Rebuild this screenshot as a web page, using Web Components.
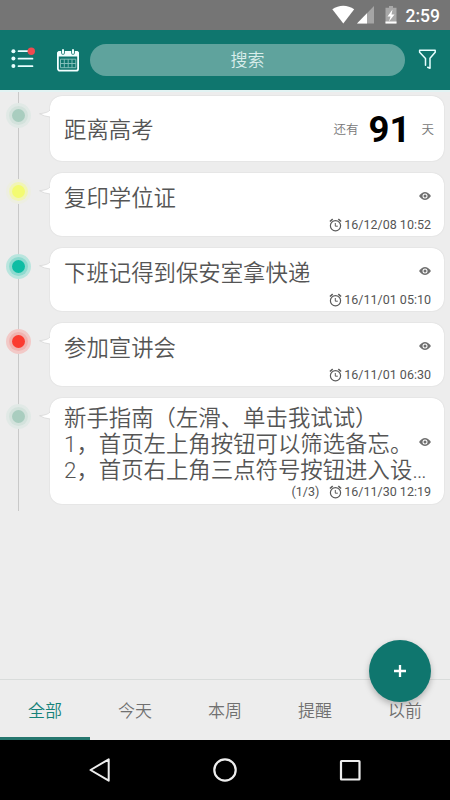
<!DOCTYPE html>
<html lang="zh-CN">
<head>
<meta charset="utf-8">
<title>备忘</title>
<style>
html,body{margin:0;height:100%}
body{font-family:Roboto,"Noto Sans CJK SC",sans-serif;color:#555;background:#ededed;overflow:hidden}
</style>
</head>
<body>
<memo-app></memo-app>
<script>
function define(name, html, setup) {
  const t = document.createElement('template');
  t.innerHTML = html;
  customElements.define(name, class extends HTMLElement {
    connectedCallback() {
      if (this.shadowRoot) return;
      const r = this.attachShadow({mode: 'open'});
      r.appendChild(t.content.cloneNode(true));
      if (setup) setup(this, r);
    }
  });
}

define('status-bar', `
<style>
:host{display:flex;height:30px;background:#757575;color:#fff;align-items:center;justify-content:flex-end;padding-right:10px;box-sizing:border-box;font:500 17.5px/30px Roboto,sans-serif}
svg{display:block;margin-right:8px}
span{padding-top:1px}
</style>
<svg width="66" height="20" viewBox="0 0 66 20">
<path d="M.3 4.2C6.800-.5 15.700-.5 22.200 4.200L11.300 18.500Z" fill="#fff"/>
<path d="M42 1V18.500H25Z" fill="#a5a5a5"/><path d="M35 8.200V18.500H25Z" fill="#fff"/>
<path d="M57 1h4v1.800h3.500V18.500h-11V2.800H57Z" fill="#a8a8a8"/>
<path d="M53.500 16.500h11v2h-11z" fill="#fff"/>
<path d="M60.500 4.500L55.500 11.500h3l-1.500 5 5.500-7h-3Z" fill="#fff"/>
</svg><span>2:59</span>`);

define('top-bar', `
<style>
:host{display:flex;height:60px;background:#0f766e;align-items:center;box-sizing:border-box;padding:0 10px 0 11px}
.list{margin-right:20px;margin-top:-4px}
.search{width:315px;height:32px;border-radius:16px;background:#5fa39d;color:#d9edeb;font-size:17px;line-height:33px;text-align:center;margin-left:10px;font-weight:350}
.filter{margin-left:13px;margin-top:-3px}
svg{display:block;flex:none}
</style>
<svg class="list" width="25" height="24" viewBox="0 0 25 24"><g fill="#e8ffff"><circle cx="2.400" cy="5.200" r="2"/><circle cx="2.400" cy="12.500" r="2"/><circle cx="2.400" cy="20" r="2"/></g><path d="M7.500 5.200H20M7.500 12.700H21.500M7.500 20.200H21.500" stroke="#e8ffff" stroke-width="1.700" stroke-linecap="round"/><circle cx="20.300" cy="5.300" r="3.700" fill="#ef4a50"/></svg>
<svg width="24" height="24" viewBox="0 0 24 24"><rect x="1.900" y="4" width="20.200" height="18.700" rx="2" fill="none" stroke="#f2ffff" stroke-width="1.800"/><path d="M1 8V5.500Q1 3 3.500 3h17Q23 3 23 5.500V8.500H1Z" fill="#f2ffff"/><path d="M7 2.500v2.500M17 2.500v2.500" stroke="#0f766e" stroke-width="3.600" stroke-linecap="round"/><path d="M7 2v3M17 2v3" stroke="#f2ffff" stroke-width="2" stroke-linecap="round"/><path d="M4.500 11.200h15.300v8.500H4.500zM4.500 15.500h15.300M8.300 11.200v8.500M12.200 11.200v8.500M16 11.200v8.500" fill="none" stroke="#8cc4bf" stroke-width=".9"/></svg>
<div class="search">搜索</div>
<svg class="filter" width="20" height="22" viewBox="0 0 20 22"><path d="M7.500 17.300V10.500L1.600 4.200V2.300H17.200V4.200L12 10.200V20.300L9.700 19.200" fill="none" stroke="#e8ffff" stroke-width="1.500" stroke-linejoin="round" stroke-linecap="round"/></svg>`);

define('time-dot', `
<style>
:host{display:block;width:25px;height:25px;border-radius:50%;background:var(--halo);flex:none;margin:6.500px 0 0 6px;box-sizing:border-box;padding:3px}
i{display:block;width:19px;height:19px;border-radius:50%;background:var(--ring);padding:3px;box-sizing:border-box}
b{display:block;width:13px;height:13px;border-radius:50%;background:var(--core)}
</style><i><b></b></i>`);

define('memo-row', `
<style>
:host{display:flex;align-items:flex-start;margin-bottom:12px}
.tail{display:block;flex:none;margin:13px 0 0 7px;width:12px;height:13px;overflow:visible;position:relative;z-index:1}
.card{width:394px;flex:none;box-sizing:border-box;background:#fff;border-radius:12px;box-shadow:0 0 1.500px rgba(0,0,0,.14)}
</style>
<time-dot></time-dot>
<svg class="tail" viewBox="0 0 12 13"><path d="M13 0Q10 4 1.500 4.700Q6 7.300 13 8Z" fill="#fff"/><path d="M12 1Q10 4 1.500 4.700Q6 7.300 12 8" fill="none" stroke="#d4d4d4" stroke-width=".7"/></svg>
<div class="card"><slot></slot></div>`, (el) => {
  const c = {
    sage: ['#e1e9e6', '#d3e2dc', '#a9cdbf'],
    yellow: ['#edeee2', '#f1f5b5', '#f3fb72'],
    teal: ['#b9e5de', '#8edacf', '#0fbda4'],
    red: ['#f2c9c7', '#f0b2af', '#fb3b30']
  }[el.getAttribute('tone')];
  el.style.setProperty('--halo', c[0]);
  el.style.setProperty('--ring', c[1]);
  el.style.setProperty('--core', c[2]);
});

define('eye-icon', `
<style>:host{display:block;width:12px;height:10px}svg{display:block}</style>
<svg width="12" height="10" viewBox="0 0 12 10"><path d="M0 5Q6-3 12 5Q6 13 0 5Z" fill="#707070"/><circle cx="6" cy="5" r="2.500" fill="#fff"/><circle cx="6" cy="5" r="1.500" fill="#707070"/></svg>`);

define('alarm-icon', `
<style>:host{display:block;width:13px;height:14px}svg{display:block}</style>
<svg width="13" height="14" viewBox="0 0 13 14" fill="none" stroke="#5a5a5a"><circle cx="6.500" cy="7.700" r="5.100" stroke-width="1.200"/><path d="M6.300 5V8.200H8.800" stroke-width="1"/><path d="M.9 3.500L3.700 1.200M12.100 3.500L9.300 1.200" stroke-width="1.600"/></svg>`);

define('memo-note', `
<style>
:host{display:block;box-sizing:border-box;padding:6px 13px 1px 14px}
.body{position:relative;min-height:36px;display:flex;align-items:center}
.text{font-size:22.400px;line-height:26px;white-space:pre;text-spacing-trim:space-all;font-weight:350;padding-top:1px;margin-bottom:-1px}
eye-icon{position:absolute;right:0;top:50%;margin-top:-6px}
.foot{display:flex;height:20px;justify-content:flex-end;align-items:center;font-size:12.500px;line-height:20px}
alarm-icon{margin-right:2px}
.count{margin-right:10px}
</style>
<div class="body"><div class="text"><slot></slot></div><eye-icon></eye-icon></div>
<div class="foot"><span class="count"></span><alarm-icon></alarm-icon><span class="date"></span></div>`, (el, r) => {
  r.querySelector('.date').textContent = el.getAttribute('date');
  const n = el.getAttribute('count');
  r.querySelector('.count').textContent = n || '';
  if (n) el.style.paddingBottom = '2px';
  if (n) r.querySelector('.foot').style.paddingTop = '.5px';
});

define('memo-countdown', `
<style>
:host{display:flex;height:64.500px;align-items:center;padding:0 10px 0 14px;box-sizing:border-box;font-size:12.500px;color:#777;font-weight:350}
.title{flex:1;font-size:22.400px;color:#555;padding-bottom:1px}
.num{font-weight:700;font-size:36.500px;line-height:40px;color:#000;margin:3px 11px 0 10px}
</style>
<div class="title"><slot></slot></div><span>还有</span><span class="num">91</span><span>天</span>`);

define('tab-item', `
<style>
:host{flex:1;display:flex;box-sizing:border-box;align-items:center;justify-content:center;border-bottom:3px solid transparent;padding-top:1px;font-size:17px;color:#707070;font-weight:350}
:host([active]){color:#16827a;border-color:#26776f}
</style><slot></slot>`);

define('fab-button', `
<style>
:host{display:flex;align-items:center;justify-content:center;width:62px;height:62px;border-radius:50%;background:#0f766e;box-shadow:0 3px 6px rgba(0,0,0,.25)}
</style><svg width="14" height="14" viewBox="0 0 14 14"><path d="M7 1v12M1 7h12" stroke="#fff" stroke-width="2.300"/></svg>`);

define('nav-bar', `
<style>
:host{display:flex;height:60px;background:#000;justify-content:center;gap:99px;align-items:center}
svg{display:block}
</style>
<svg width="26" height="26" viewBox="0 0 26 26"><path d="M21.700 2.300V23.700L3.500 13Z" fill="none" stroke="#eee" stroke-width="2" stroke-linejoin="round"/></svg>
<svg width="26" height="26" viewBox="0 0 26 26"><circle cx="13" cy="13" r="10.700" fill="none" stroke="#eee" stroke-width="2.200"/></svg>
<svg width="26" height="26" viewBox="0 0 26 26"><rect x="4" y="4" width="18.500" height="18.500" rx=".5" fill="none" stroke="#eee" stroke-width="2.200"/></svg>`);

define('memo-app', `
<style>
:host{display:flex;flex-direction:column;width:450px;height:800px;background:#ededed;position:relative}
main{flex:1;border-top:2px solid #e2f3f3;box-sizing:border-box}
.timeline{height:419px;box-sizing:border-box;padding-top:4px;background:linear-gradient(#c9c9c9,#c9c9c9) 18px 0/1px 100% no-repeat}
nav{display:flex;height:61px;border-top:1px solid #d9dcdb;box-sizing:border-box}
fab-button{position:absolute;left:369px;top:640px}
</style>
<status-bar></status-bar>
<top-bar></top-bar>
<main><div class="timeline">
<memo-row tone="sage"><memo-countdown>距离高考</memo-countdown></memo-row>
<memo-row tone="yellow"><memo-note date="16/12/08 10:52">复印学位证</memo-note></memo-row>
<memo-row tone="teal"><memo-note date="16/11/01 05:10">下班记得到保安室拿快递</memo-note></memo-row>
<memo-row tone="red"><memo-note date="16/11/01 06:30">参加宣讲会</memo-note></memo-row>
<memo-row tone="sage"><memo-note date="16/11/30 12:19" count="(1/3)">新手指南（左滑、单击我试试）
1，首页左上角按钮可以筛选备忘。
2，首页右上角三点符号按钮进入设…</memo-note></memo-row>
</div></main>
<nav><tab-item active>全部</tab-item><tab-item>今天</tab-item><tab-item>本周</tab-item><tab-item>提醒</tab-item><tab-item>以前</tab-item></nav>
<nav-bar></nav-bar>
<fab-button></fab-button>`);
</script>
</body>
</html>
